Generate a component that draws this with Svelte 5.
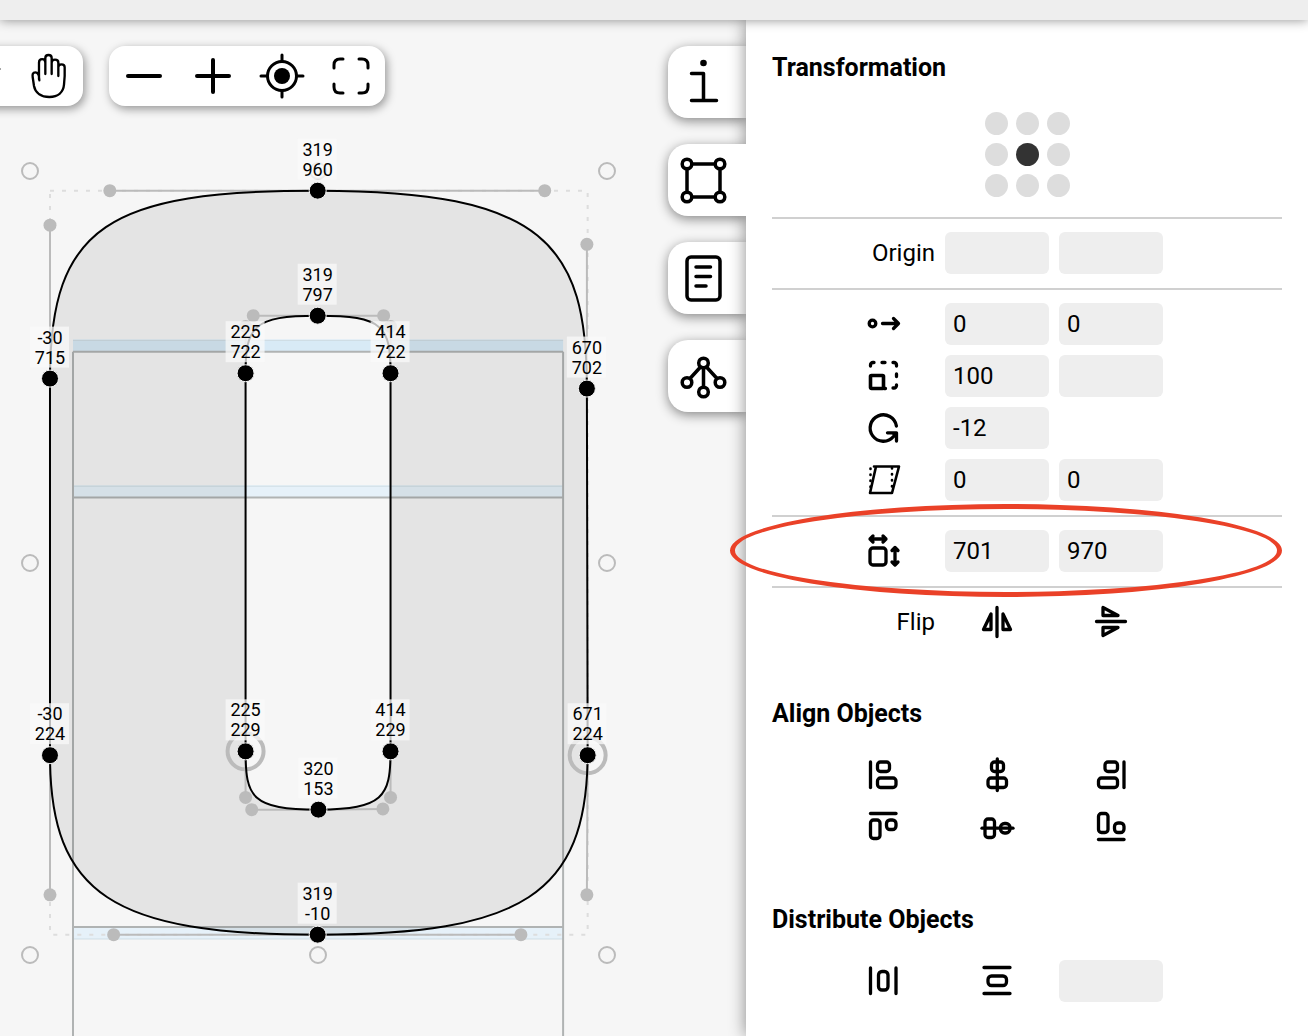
<script lang="ts">
  type Point = { x: number; y: number; ring?: boolean; handles: [number, number][] };
  type Row = { id: string; icon: string; values: string[] };

  // canvas position of the glyph origin and pixels per font unit
  const originX = 73;
  const originY = 907;
  const scale = 0.767;

  const px = (x: number) => originX + x * scale;
  const py = (y: number) => originY - y * scale;

  const points: Point[] = [
    { x: 319, y: 960, handles: [[48, 960], [615, 960]] },
    { x: 670, y: 702, handles: [[670, 890]] },
    { x: 671, y: 224, ring: true, handles: [[670, 42]] },
    { x: 319, y: -10, handles: [[584, -10], [53, -10]] },
    { x: -30, y: 224, handles: [[-30, 42]] },
    { x: -30, y: 715, handles: [[-30, 915]] },
    { x: 319, y: 797, handles: [[235, 797], [405, 797]] },
    { x: 225, y: 722, handles: [[225, 783]] },
    { x: 225, y: 229, ring: true, handles: [[225, 169]] },
    { x: 320, y: 153, handles: [[233, 153], [404, 154]] },
    { x: 414, y: 229, handles: [[414, 169]] },
    { x: 414, y: 722, handles: [[414, 783]] }
  ];

  const p = (x: number, y: number) => `${px(x)} ${py(y)}`;

  const outline = [
    `M${p(319, 960)}C${p(615, 960)} ${p(670, 890)} ${p(670, 702)}L${p(671, 224)}`,
    `C${p(670, 42)} ${p(584, -10)} ${p(319, -10)}`,
    `C${p(53, -10)} ${p(-30, 42)} ${p(-30, 224)}L${p(-30, 715)}`,
    `C${p(-30, 915)} ${p(48, 960)} ${p(319, 960)}Z`,
    `M${p(319, 797)}C${p(235, 797)} ${p(225, 783)} ${p(225, 722)}L${p(225, 229)}`,
    `C${p(225, 169)} ${p(233, 153)} ${p(320, 153)}`,
    `C${p(404, 154)} ${p(414, 169)} ${p(414, 229)}L${p(414, 722)}`,
    `C${p(414, 783)} ${p(405, 797)} ${p(319, 797)}Z`
  ].join('');

  const advance = 639;
  const zones = [
    { y: 750, from: 766, fill: '#d8eaf6' },
    { y: 560, from: 576, fill: '#e6f1f9' },
    { y: 0, from: 0, fill: '#e6f1f9' }
  ];

  const boundsHandles = [
    [30, 151], [318, 151], [607, 151],
    [30, 543], [607, 543],
    [30, 935], [318, 935], [607, 935]
  ];

  const rows: Row[] = [
    { id: 'move', icon: 'move', values: ['0', '0'] },
    { id: 'scale', icon: 'scale', values: ['100', ''] },
    { id: 'rotate', icon: 'rotate', values: ['-12'] },
    { id: 'skew', icon: 'skew', values: ['0', '0'] }
  ];

  const aligns = ['left', 'center', 'right', 'top', 'middle', 'bottom'];
  const tabs = ['info', 'transform', 'notes', 'related'];
  const anchors = ['top left', 'top', 'top right', 'left', 'center', 'right', 'bottom left', 'bottom', 'bottom right'];

  let activeTab = $state('transform');
  let anchor = $state('center');
</script>

{#snippet icon(name: string)}
  <svg class="icon" viewBox="0 0 36 36" aria-hidden="true">
    {#if name === 'move'}
      <circle cx="7.5" cy="17.5" r="3.3" />
      <path d="M17.5 17.5H33M28.5 12.5l5 5-5 5" />
    {:else if name === 'scale'}
      <rect x="5.5" y="17.5" width="13" height="13" rx="1" stroke-width="3.6" />
      <path d="M19 30.5h1.5M5.5 8V7a2.5 2.5 0 0 1 2.5-2.5h1M17 4.5h3M28 4.5h1A2.5 2.5 0 0 1 31.5 7v1M31.5 16v2.500M31.5 27v.5a2.5 2.5 0 0 1-2.5 2.5h-1" />
    {:else if name === 'rotate'}
      <path d="M31.4 16A13.2 13.2 0 1 0 28.5 26.5L31 23M22.5 22.8H31.5V31M29 25l2-2" />
    {:else if name === 'skew'}
      <g stroke-width="2.6">
        <path d="M11 4.5H34L27 31H5Z" />
        <path d="M5.5 25V4.5H10M27 6V26" stroke-dasharray="0.5 5.5" />
      </g>
    {:else if name === 'size'}
      <rect x="5" y="15" width="16" height="17" rx="3" />
      <path d="M5 6H21M8 3 5 6l3 3M18 3l3 3-3 3M30 14.5V32M27 17.5l3-3 3 3M27 29l3 3 3-3" />
    {:else if name === 'flip-x'}
      <path d="M18 3.5V32.5M12 10V25.5H4.5ZM24 10V25.5H31.5Z" />
    {:else if name === 'flip-y'}
      <path d="M3.5 17.5H32.5M10 3.5V11.5H25ZM10 23.5H25L10 31.5Z" />
    {:else if name === 'left'}
      <rect x="12.5" y="5" width="12" height="9.5" rx="3" />
      <rect x="12.5" y="21" width="18.5" height="9.5" rx="3" />
      <path d="M5.5 5V30.5" />
    {:else if name === 'center'}
      <rect x="12.5" y="5" width="12" height="9.5" rx="3" />
      <rect x="9" y="21" width="18.5" height="9.5" rx="3" />
      <path d="M18.3 2V33.5" />
    {:else if name === 'right'}
      <rect x="12" y="5" width="12.5" height="9.5" rx="3" />
      <rect x="5.5" y="21" width="19" height="9.5" rx="3" />
      <path d="M31 5V30.5" />
    {:else if name === 'top'}
      <rect x="5.5" y="11" width="9.5" height="18.5" rx="3" />
      <rect x="21.5" y="11" width="9.5" height="9.5" rx="3.5" />
      <path d="M5.5 4.5H31" />
    {:else if name === 'middle'}
      <rect x="6" y="10" width="9.5" height="18.5" rx="3" />
      <rect x="21.5" y="14.5" width="9.5" height="9.5" rx="4" />
      <path d="M3 19.2H34" />
    {:else if name === 'bottom'}
      <rect x="5.5" y="4.5" width="9.5" height="19" rx="3" />
      <rect x="21.5" y="14" width="9.5" height="9.5" rx="3.5" />
      <path d="M5.5 30.5H31" />
    {:else if name === 'spread-x'}
      <rect x="13.5" y="8.5" width="9.5" height="18.5" rx="3.5" />
      <path d="M5.5 5V30.5M31 5V30.5" />
    {:else if name === 'spread-y'}
      <rect x="9" y="13" width="18.5" height="9.5" rx="3.5" />
      <path d="M5 4.5H31M5 30.5H31" />
    {/if}
  </svg>
{/snippet}

<div class="app">
  <header class="topbar"></header>

  <main class="workspace">
    <section class="canvas" aria-label="Glyph canvas">
      <svg class="glyph" aria-hidden="true">
        {#each zones as zone}
          <rect x={originX} y={py(zone.from)} width={advance * scale} height="12" fill={zone.fill} />
          <path class="zone-edge" d="M{originX} {zone.y ? py(zone.from) + 1 : py(0) + 12}h{advance * scale}" />
          <path class="metric" d="M{originX} {py(zone.y)}h{advance * scale}" />
        {/each}
        <path class="metric" d="M{originX} {py(750)}V2000M{px(advance)} {py(750)}V2000" />

        <rect class="bounds" x={px(-30)} y={py(960)} width={701 * scale} height={970 * scale} />
        {#each boundsHandles as [x, y]}
          <circle class="bounds-handle" cx={x} cy={y} r="8" />
        {/each}

        <path class="fill" d={outline} />
        {#each points as point}
          {#if point.ring}
            <circle class="ring" cx={px(point.x)} cy={py(point.y)} r="18" />
          {/if}
          {#each point.handles as [hx, hy]}
            <path class="lever" d="M{p(point.x, point.y)}L{p(hx, hy)}" />
            <circle class="handle" cx={px(hx)} cy={py(hy)} r="6.5" />
          {/each}
        {/each}
        <path class="outline" d={outline} />

        {#each points as point}
          <circle class="node" cx={px(point.x)} cy={py(point.y)} r="8.5" />
        {/each}
        {#each points as point}
          <rect class="tag" x={px(point.x) - 20} y={py(point.y) - 52} width="39" height="41" />
          <text x={px(point.x)} y={py(point.y) - 35}>{point.x}</text>
          <text x={px(point.x)} y={py(point.y) - 15}>{point.y}</text>
        {/each}
      </svg>

      <nav class="toolbar">
        <div class="pill">
          <button type="button" aria-label="Knife">
            <svg class="tool" viewBox="0 0 48 48"><path d="M10 40 43 17" /></svg>
          </button>
          <button type="button" aria-label="Hand">
            <svg class="tool hand" viewBox="72 156 144 144">
              <path d="M115 241C115 228 112 217 103 217C95 217 94 224 95 231L99 258C103 280 122 291 145 291C172 291 187 276 189 254L191 228V202C191 190 172 190 172 202M172 228V188C172 176 152 176 152 188M152 222V174C152 162 133 162 133 174V222M133 188C133 174 114 174 114 188V238" />
            </svg>
          </button>
        </div>
        <div class="pill">
          <button type="button" aria-label="Zoom out">
            <svg class="tool bold" viewBox="0 0 48 48"><path d="M8 24H40" /></svg>
          </button>
          <button type="button" aria-label="Zoom in">
            <svg class="tool bold" viewBox="0 0 48 48"><path d="M8 24H40M24 8V40" /></svg>
          </button>
          <button type="button" aria-label="Center glyph">
            <svg class="tool" viewBox="0 0 48 48">
              <circle cx="24" cy="24" r="14.5" />
              <circle cx="24" cy="24" r="8" fill="#000" stroke="none" />
              <path d="M24 3V9M24 39V45M3 24H9M39 24H45" />
            </svg>
          </button>
          <button type="button" aria-label="Full screen">
            <svg class="tool" viewBox="0 0 48 48">
              <path d="M16 7H13Q7 7 7 13V16M32 7H35Q41 7 41 13V16M16 41H13Q7 41 7 35V32M32 41H35Q41 41 41 35V32" />
            </svg>
          </button>
        </div>
      </nav>

      <div class="tabs">
        {#each tabs as tab}
          <button
            type="button"
            class="tab"
            class:active={activeTab === tab}
            aria-label={tab}
            onclick={() => { activeTab = tab; }}
          >
            <svg class="tool" viewBox="0 0 48 48" stroke-width="3.5">
              {#if tab === 'info'}
                <circle cx="23.5" cy="5" r="3.3" fill="#000" stroke="none" />
                <path d="M11.5 15.5H23.5V42.5M11.5 42.5H36.5" />
              {:else if tab === 'transform'}
                <path d="M12 8H35M12 41H35M7 13V36M40 13V36" />
                <circle cx="7" cy="8" r="4.8" />
                <circle cx="40" cy="8" r="4.8" />
                <circle cx="7" cy="41" r="4.8" />
                <circle cx="40" cy="41" r="4.8" />
              {:else if tab === 'notes'}
                <rect x="7" y="3" width="33" height="43" rx="4" />
                <path d="M16 13H30.5M16 22.5H30.5M16 32H26" />
              {:else}
                <path d="M20.5 15 10 26.5M26.5 15 37 26.5M23.5 16V34" />
                <circle cx="23.5" cy="11" r="4.8" />
                <circle cx="7" cy="30.5" r="4.8" />
                <circle cx="40" cy="30.5" r="4.8" />
                <circle cx="23.5" cy="40" r="4.8" />
              {/if}
            </svg>
          </button>
        {/each}
      </div>
    </section>

    <aside class="panel">
      <h2>Transformation</h2>
      <div class="anchors">
        {#each anchors as name}
          <input type="radio" name="anchor" value={name} bind:group={anchor} aria-label={name} />
        {/each}
      </div>

      <div class="group">
        <label for="origin-x">Origin</label>
        <input id="origin-x" type="text" />
        <input type="text" aria-label="Origin y" />
      </div>

      <div class="group">
        {#each rows as row}
          <label class="icon-cell" for={row.id} aria-label={row.id}>{@render icon(row.icon)}</label>
          {#each row.values as value, i}
            <input id={i === 0 ? row.id : `${row.id}-y`} type="text" {value} aria-label={`${row.id} ${i === 0 ? 'x' : 'y'}`} />
          {/each}
        {/each}
      </div>

      <div class="group marked">
        <label class="icon-cell" for="width" aria-label="Dimensions">{@render icon('size')}</label>
        <input id="width" type="text" value="701" />
        <input type="text" value="970" aria-label="Height" />
      </div>

      <div class="group">
        <span class="caption">Flip</span>
        <button type="button" aria-label="Flip horizontally">{@render icon('flip-x')}</button>
        <button type="button" aria-label="Flip vertically">{@render icon('flip-y')}</button>
      </div>

      <h2>Align Objects</h2>
      <div class="group plain">
        {#each aligns as align}
          <button type="button" aria-label={`Align ${align}`}>{@render icon(align)}</button>
        {/each}
      </div>

      <h2>Distribute Objects</h2>
      <div class="group plain">
        <button type="button" aria-label="Distribute horizontally">{@render icon('spread-x')}</button>
        <button type="button" aria-label="Distribute vertically">{@render icon('spread-y')}</button>
        <input type="text" aria-label="Distance" />
      </div>
    </aside>
  </main>
</div>

<style>
  :global(body) {
    margin: 0;
    overflow: hidden;
  }

  .app {
    display: flex;
    flex-direction: column;
    height: 100vh;
    font-family: Roboto, "Open Sans", sans-serif;
    font-size: 24px;
    font-weight: 400;
    color: #000;
    background: #f6f6f6;
  }

  .topbar {
    flex: 0 0 20px;
    background: #eee;
    box-shadow: 0 0 12px rgba(0, 0, 0, 0.45);
    z-index: 5;
  }

  .workspace {
    flex: 1;
    display: flex;
    min-height: 0;
  }

  .canvas {
    flex: 1;
    position: relative;
    min-width: 0;
  }

  .glyph {
    position: absolute;
    inset: 0;
    width: 100%;
    height: 100%;
    overflow: hidden;
    fill: none;
  }

  .metric {
    stroke: #b0b3b3;
    stroke-width: 2;
  }

  .zone-edge {
    stroke: #cfdde5;
    stroke-width: 1;
  }

  .bounds {
    stroke: #ddd;
    stroke-width: 2;
    stroke-dasharray: 4 8;
  }

  .bounds-handle {
    stroke: #bbb;
    stroke-width: 2;
  }

  .fill {
    fill: rgba(0, 0, 0, 0.07);
    fill-rule: evenodd;
  }

  .outline {
    stroke: #000;
    stroke-width: 2;
  }

  .ring {
    stroke: #bbb;
    stroke-width: 4;
  }

  .lever {
    stroke: #bbb;
    stroke-width: 2;
  }

  .handle {
    fill: #bbb;
  }

  .node {
    fill: #000;
    stroke: #f5f5f5;
    stroke-width: 1;
  }

  .tag {
    fill: rgba(250, 250, 250, 0.75);
  }

  .glyph text {
    fill: #000;
    font-size: 18px;
    font-weight: 400;
    text-anchor: middle;
  }

  .toolbar {
    position: absolute;
    top: 26px;
    left: -55px;
    display: flex;
    gap: 26px;
  }

  .pill {
    display: flex;
    border-radius: 16px;
    background: #fff;
    box-shadow: 2px 3px 10px rgba(0, 0, 0, 0.4);
  }

  .pill button {
    width: 69px;
    height: 60px;
  }

  button {
    display: flex;
    align-items: center;
    justify-content: center;
    padding: 0;
    border: none;
    background: transparent;
    cursor: pointer;
  }

  .tool {
    width: 48px;
    height: 48px;
    fill: none;
    stroke: #000;
    stroke-linecap: round;
    stroke-linejoin: round;
  }

  .pill .tool {
    stroke-width: 3;
  }

  .pill .bold {
    stroke-width: 4;
  }

  .pill .hand {
    stroke-width: 7;
  }

  .tabs {
    position: absolute;
    top: 26px;
    right: 0;
    display: flex;
    flex-direction: column;
    gap: 26px;
  }

  .tab {
    width: 78px;
    height: 72px;
    padding-right: 6px;
    border-radius: 20px 0 0 20px;
    background: #fff;
    box-shadow: 0 3px 12px rgba(0, 0, 0, 0.45);
    clip-path: inset(-20px 0 -20px -20px);
  }

  .tab.active {
    position: relative;
    z-index: 2;
  }

  .panel {
    position: relative;
    z-index: 1;
    flex: 0 0 562px;
    box-sizing: border-box;
    padding: 34px 26px 0;
    background: #fff;
    box-shadow: 0 0 16px rgba(0, 0, 0, 0.45);
  }

  h2 {
    margin: 0;
    font-size: 25px;
    line-height: 28px;
    font-weight: 700;
  }

  .anchors {
    display: grid;
    grid-template-columns: repeat(3, 23px);
    gap: 8px;
    justify-content: center;
    padding: 30px 0 20px;
  }

  .anchors input {
    appearance: none;
    width: 23px;
    height: 23px;
    margin: 0;
    border-radius: 50%;
    background: #ddd;
  }

  .anchors input:checked {
    background: #333;
  }

  .group {
    position: relative;
    display: grid;
    grid-template-columns: 163px 104px 104px;
    grid-auto-rows: 42px;
    gap: 10px;
    padding: 13px 0 14px;
    border-top: 2px solid #d0d0d0;
  }

  .group.plain {
    border-top: none;
  }

  .group label,
  .caption {
    justify-self: end;
    align-self: center;
  }

  .group .icon-cell,
  .group button {
    display: flex;
    align-items: center;
    justify-content: center;
    justify-self: end;
    width: 104px;
    height: 42px;
  }

  .group label:nth-of-type(n + 2) {
    grid-column: 1;
  }

  .group input {
    box-sizing: border-box;
    width: 104px;
    height: 42px;
    padding: 0 8px;
    border: none;
    border-radius: 6px;
    background: #eee;
    color: #000;
    font: inherit;
  }

  /* red marker ring around the dimensions row */
  .marked::after {
    content: "";
    position: absolute;
    z-index: 3;
    inset: -13px 0 -11px -42px;
    border: 5px solid #ea4128;
    border-radius: 50%;
    pointer-events: none;
  }

  .group + h2 {
    margin-top: 43px;
  }

  h2 + .plain {
    padding: 26px 0 15px;
  }

  .icon {
    width: 36px;
    height: 36px;
    fill: none;
    stroke: #000;
    stroke-width: 3.3;
    stroke-linecap: round;
    stroke-linejoin: round;
  }
</style>
